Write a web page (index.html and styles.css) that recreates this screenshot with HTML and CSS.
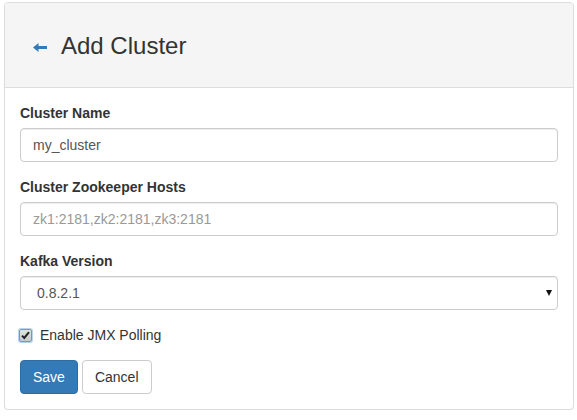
FILE: index.html
```html
<!DOCTYPE html>
<html>
<head>
<meta charset="utf-8">
<link rel="stylesheet" href="styles.css">
</head>
<body>
<div class="panel">
  <div class="panel-heading">
    <h3 class="title">
      <svg class="back" width="14" height="9" viewBox="0 0 14 9"><path d="M0 4.5 L5.5 0 L5.5 3 L14 3 L14 6 L5.5 6 L5.5 9 Z" fill="#337ab7"/></svg>
      <span>Add Cluster</span>
    </h3>
  </div>
  <div class="panel-body">
    <div class="form-group">
      <label class="label">Cluster Name</label>
      <input class="control" type="text" value="my_cluster">
    </div>
    <div class="form-group">
      <label class="label">Cluster Zookeeper Hosts</label>
      <input class="control" type="text" placeholder="zk1:2181,zk2:2181,zk3:2181">
    </div>
    <div class="form-group">
      <label class="label">Kafka Version</label>
      <div class="select-wrap">
        <select class="control select"><option>0.8.2.1</option></select>
      </div>
    </div>
    <div class="form-group">
      <label class="check-row">
        <span class="check"><svg width="9" height="9" viewBox="0 0 9 9"><path d="M1 4.6 L3.3 7 L8 1.2" fill="none" stroke="#222" stroke-width="2"/></svg></span>
        <span>Enable JMX Polling</span>
      </label>
    </div>
    <div class="actions">
      <button class="btn btn-primary" type="button">Save</button>
      <button class="btn btn-default" type="button">Cancel</button>
    </div>
  </div>
</div>
</body>
</html>
```

FILE: styles.css
```css
html, body {
  margin: 0;
  padding: 0;
  background: #fff;
}
body {
  font-family: "Liberation Sans", Arial, Helvetica, sans-serif;
  font-size: 14px;
  line-height: 20px;
  color: #333;
}
.panel {
  width: 570px;
  box-sizing: border-box;
  margin: 2px 3px 0 4px;
  border: 1px solid #ddd;
  border-radius: 4px;
  box-shadow: 0 1px 1px rgba(0,0,0,.05);
  background: #fff;
}
.panel-heading {
  background: #f5f5f5;
  border-bottom: 1px solid #ddd;
  border-radius: 3px 3px 0 0;
  padding: 10px 15px;
}
.title {
  margin: 20px 0 18px;
  font-size: 24px;
  line-height: 26px;
  font-weight: normal;
  color: #333;
  display: flex;
  align-items: center;
}
.back {
  display: block;
  margin: 2px 14px 0 13px;
}
.panel-body {
  padding: 15px;
}
.form-group {
  margin-bottom: 15px;
}
.label {
  display: block;
  font-weight: bold;
  margin-bottom: 5px;
}
.control {
  display: block;
  width: 100%;
  height: 34px;
  box-sizing: border-box;
  padding: 6px 12px;
  font-family: inherit;
  font-size: 14px;
  line-height: 20px;
  color: #555;
  background: #fff;
  border: 1px solid #ccc;
  border-radius: 4px;
  box-shadow: inset 0 1px 1px rgba(0,0,0,.075);
  outline: none;
  margin: 0;
}
.control::placeholder {
  color: #999;
}
.select-wrap {
  position: relative;
}
.select {
  -webkit-appearance: none;
  appearance: none;
  padding-left: 16px;
}
.select-wrap::after {
  content: "";
  position: absolute;
  right: 6px;
  top: 14px;
  width: 0;
  height: 0;
  border-left: 3.5px solid transparent;
  border-right: 3.5px solid transparent;
  border-top: 6px solid #111;
}
.check-row {
  display: flex;
  align-items: flex-start;
  height: 20px;
}
.check {
  width: 13px;
  height: 13px;
  box-sizing: border-box;
  margin: 4px 8px 0 -1px;
  border: 1px solid #6d98d4;
  border-radius: 2px;
  box-shadow: 0 0 0 1px #bcd2ef;
  background: linear-gradient(#e2e2e2, #c9c9c9);
  display: flex;
  align-items: center;
  justify-content: center;
}
.check svg {
  display: block;
}
.actions {
  display: flex;
  gap: 4px;
}
.btn {
  height: 34px;
  box-sizing: border-box;
  padding: 6px 12px;
  font-family: inherit;
  font-size: 14px;
  line-height: 20px;
  border: 1px solid transparent;
  border-radius: 4px;
  margin: 0;
}
.btn-primary {
  background: #337ab7;
  border-color: #2e6da4;
  color: #fff;
}
.btn-default {
  background: #fff;
  border-color: #ccc;
  color: #333;
}
```
